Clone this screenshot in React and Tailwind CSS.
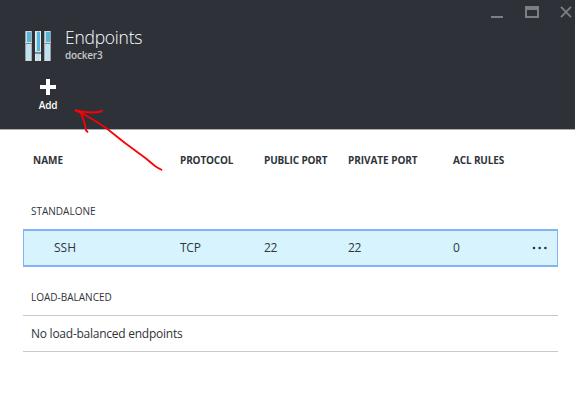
const columns = 'grid grid-cols-[147px_84px_84px_105px_1fr]';

function EndpointsIcon() {
  return (
    <svg width="26" height="30" viewBox="0 0 26 30" shapeRendering="crispEdges" aria-hidden="true">
      {[
        { x: 0, width: 7, knob: 11, knobHeight: 1, left: '#999da0', right: '#a9adb0' },
        { x: 10, width: 6, knob: 20, knobHeight: 2, left: '#e8e9ea', right: '#e8e9ea' },
        { x: 19, width: 7, knob: 11, knobHeight: 1, left: '#a9adb0', right: '#999da0' },
      ].map(({ x, width, knob, knobHeight, left, right }) => (
        <g key={x}>
          <rect x={x} width={width} height="30" fill="#d0d5d8" />
          <rect x={x} width="1" height="30" fill={left} />
          <rect x={x + width - 1} width="1" height="30" fill={right} />
          <rect x={x + 1} y="1" width={width - 2} height="28" fill="#bde3f1" />
          <rect x={x + 2} y="1" width={width - 3} height={knob - 1} fill="#59b4d9" />
          <rect x={x} y={knob} width={width} height="1" fill="#d5d8da" />
          <rect x={x} y={knob + 1} width={width} height={knobHeight} fill="#85898c" />
        </g>
      ))}
    </svg>
  );
}

function WindowControls() {
  return (
    <svg className="absolute left-[491px] top-[6px]" width="81" height="12" viewBox="0 0 81 12" aria-hidden="true">
      <path d="M0 10h12v2H0z" fill="#7c7f84" />
      <path fillRule="evenodd" d="M34 0h14v12H34zM36 4v6h10V4z" fill="#7c7f84" />
      <path d="M70 .8l10 10.4M80 .8L70 11.2" stroke="#7c7f84" strokeWidth="1.8" />
    </svg>
  );
}

function Arrow() {
  return (
    <svg
      className="pointer-events-none absolute left-[60px] top-[90px]"
      width="120"
      height="90"
      viewBox="0 0 120 90"
      fill="none"
      stroke="#fb0207"
      strokeWidth="1.8"
      strokeLinecap="round"
      strokeLinejoin="round"
      aria-hidden="true"
    >
      <path d="M15.5 20.2C28 26 39 33 48 39.500L65 53L86 68.500L95 76Q98 78 101.500 79.800" />
      <path d="M15.500 20.500Q24 22.500 34 22.500Q40 22.400 42 20.500" />
      <path d="M16 20.500L21 23Q23 28 25 35L26 40.500L27.500 41.800" />
    </svg>
  );
}

export default function App() {
  return (
    <main className="relative h-[407px] w-[575px] overflow-hidden bg-white font-['Open_Sans','Noto_Sans',sans-serif] text-[#2f3439]">
      <header className="h-[130px] border-b border-[#a9abae] bg-[#2e3238] pt-[26px] text-white">
        <div className="flex pl-[25px]">
          <div className="pt-[5px]"><EndpointsIcon /></div>
          <div className="pl-[14px]">
            <h1 className="h-[22px] text-[17.5px] font-light leading-[22px] tracking-[-0.25px]">Endpoints</h1>
            <p className="text-[10px] font-semibold leading-[15px] tracking-[-0.2px] text-[#c6c9cc]">docker3</p>
          </div>
        </div>
        <button className="ml-[28px] mt-[16px] flex w-10 flex-col items-center">
          <svg width="16" height="16" viewBox="0 0 16 16" aria-hidden="true">
            <path d="M6 0h4v6h6v4h-6v6H6v-6H0V6h6z" fill="white" />
          </svg>
          <span className="mt-[3px] text-[10px] font-semibold leading-[14px] tracking-[-0.2px]">Add</span>
        </button>
      </header>
      <WindowControls />

      <section className="pl-[23px] pr-[17px] pt-[23px]">
        <div className={`${columns} pl-[10px] text-[10px] font-bold leading-[14px] tracking-[-0.15px]`}>
          <span className="tracking-normal">NAME</span>
          <span>PROTOCOL</span>
          <span>PUBLIC PORT</span>
          <span className="tracking-[-0.05px]">PRIVATE PORT</span>
          <span>ACL RULES</span>
        </div>

        <h2 className="mt-[37px] pl-2 text-[10px] font-normal leading-[14px]">STANDALONE</h2>
        <div className={`${columns} relative mt-[11px] h-[38px] items-center border-x border-y-2 border-[#84b2f6] bg-[#d7f4fe] pl-[9px] text-[12px] leading-[16px] tracking-[-0.25px]`}>
          <span className="pl-[21px] tracking-normal">SSH</span>
          <span>TCP</span>
          <span>22</span>
          <span>22</span>
          <span>0</span>
          <svg className="absolute left-[508px] top-[15px]" width="16" height="4" viewBox="0 0 16 4" fill="#2f3439" aria-hidden="true">
            <circle cx="2" cy="2" r="1.3" />
            <circle cx="7.700" cy="2" r="1.3" />
            <circle cx="13.400" cy="2" r="1.3" />
          </svg>
        </div>

        <h2 className="mt-[23px] pl-2 text-[10px] font-normal leading-[14px]">LOAD-BALANCED</h2>
        <p className="mt-[11px] h-[37px] border-y border-[#c8c9ca] pl-2 text-[12px] leading-[35px] tracking-[-0.25px]">No load-balanced endpoints</p>
      </section>
      <Arrow />
    </main>
  );
}
